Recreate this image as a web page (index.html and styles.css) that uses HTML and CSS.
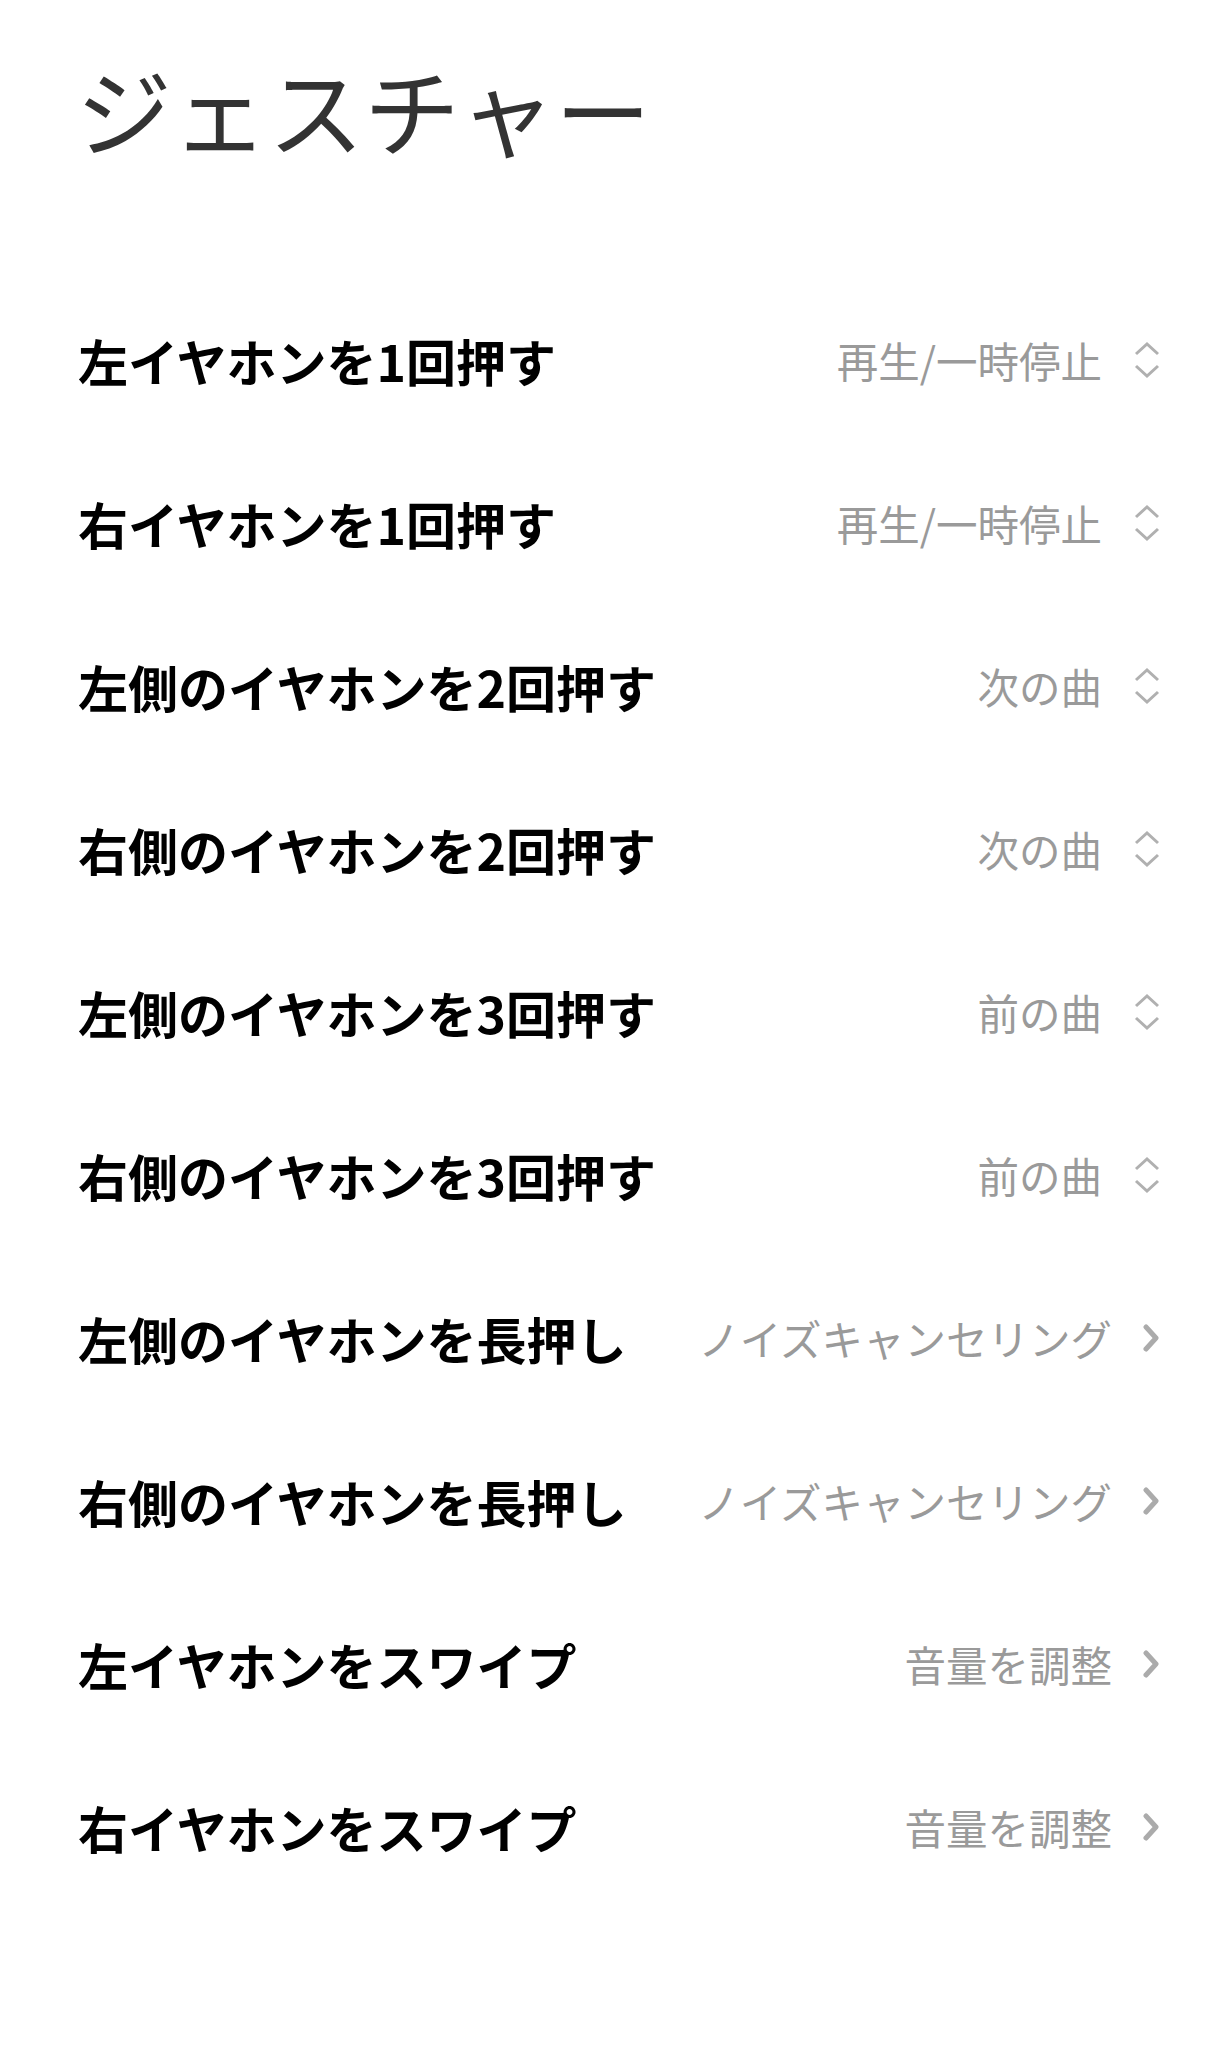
FILE: index.html
```html
<!DOCTYPE html>
<html lang="ja">
<head>
<meta charset="utf-8">
<link rel="stylesheet" href="styles.css">
</head>
<body>
<div class="page">
  <h1 class="title">ジェスチャー</h1>
  <ul class="list">
    <li class="row"><span class="label">左イヤホンを1回押す</span><span class="value">再生/一時停止</span><span class="icon"><svg class="updown" viewBox="0 0 28 38"><path d="M3 13 L14 3 L25 13 M3 25 L14 35 L25 25"/></svg></span></li>
    <li class="row"><span class="label">右イヤホンを1回押す</span><span class="value">再生/一時停止</span><span class="icon"><svg class="updown" viewBox="0 0 28 38"><path d="M3 13 L14 3 L25 13 M3 25 L14 35 L25 25"/></svg></span></li>
    <li class="row"><span class="label">左側のイヤホンを2回押す</span><span class="value">次の曲</span><span class="icon"><svg class="updown" viewBox="0 0 28 38"><path d="M3 13 L14 3 L25 13 M3 25 L14 35 L25 25"/></svg></span></li>
    <li class="row"><span class="label">右側のイヤホンを2回押す</span><span class="value">次の曲</span><span class="icon"><svg class="updown" viewBox="0 0 28 38"><path d="M3 13 L14 3 L25 13 M3 25 L14 35 L25 25"/></svg></span></li>
    <li class="row"><span class="label">左側のイヤホンを3回押す</span><span class="value">前の曲</span><span class="icon"><svg class="updown" viewBox="0 0 28 38"><path d="M3 13 L14 3 L25 13 M3 25 L14 35 L25 25"/></svg></span></li>
    <li class="row"><span class="label">右側のイヤホンを3回押す</span><span class="value">前の曲</span><span class="icon"><svg class="updown" viewBox="0 0 28 38"><path d="M3 13 L14 3 L25 13 M3 25 L14 35 L25 25"/></svg></span></li>
    <li class="row"><span class="label">左側のイヤホンを長押し</span><span class="value">ノイズキャンセリング</span><span class="icon icon-chev"><svg class="chev" viewBox="0 0 20 28"><path d="M5 3 L15 14 L5 25"/></svg></span></li>
    <li class="row"><span class="label">右側のイヤホンを長押し</span><span class="value">ノイズキャンセリング</span><span class="icon icon-chev"><svg class="chev" viewBox="0 0 20 28"><path d="M5 3 L15 14 L5 25"/></svg></span></li>
    <li class="row"><span class="label">左イヤホンをスワイプ</span><span class="value">音量を調整</span><span class="icon icon-chev"><svg class="chev" viewBox="0 0 20 28"><path d="M5 3 L15 14 L5 25"/></svg></span></li>
    <li class="row"><span class="label">右イヤホンをスワイプ</span><span class="value">音量を調整</span><span class="icon icon-chev"><svg class="chev" viewBox="0 0 20 28"><path d="M5 3 L15 14 L5 25"/></svg></span></li>
  </ul>
</div>
</body>
</html>
```

FILE: styles.css
```css
html, body {
  margin: 0;
  padding: 0;
  background: #ffffff;
}
body {
  font-family: "Noto Sans CJK JP", "Noto Sans", sans-serif;
}
.page {
  width: 1220px;
  height: 2064px;
  box-sizing: border-box;
}
.title {
  margin: 0;
  padding: 42px 0 0 76px;
  height: 132px;
  font-size: 96px;
  line-height: 132px;
  font-weight: 400;
  color: #333333;
}
.list {
  list-style: none;
  margin: 0;
  padding: 104px 0 0 0;
}
.row {
  display: flex;
  align-items: center;
  height: 163px;
  padding: 0 59px 0 78px;
}
.label {
  flex: 1;
  font-size: 50px;
  font-weight: 700;
  color: #000000;
  white-space: nowrap;
}
.value {
  font-size: 41.5px;
  font-weight: 400;
  color: #9a9a9a;
  white-space: nowrap;
}
.icon {
  display: flex;
  align-items: center;
  justify-content: flex-end;
  width: 30px;
  margin-left: 29px;
}
.icon-chev {
  width: 20px;
}
.updown {
  width: 28px;
  height: 38px;
  fill: none;
  stroke: #b0b0b0;
  stroke-width: 3;
}
.chev {
  width: 20px;
  height: 28px;
  fill: none;
  stroke: #ababab;
  stroke-width: 5;
  stroke-linecap: round;
  stroke-linejoin: round;
}
```
